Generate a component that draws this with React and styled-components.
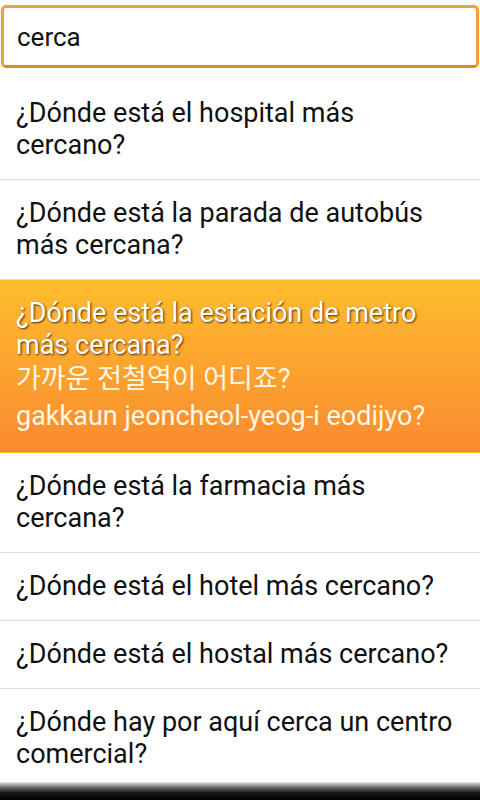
import styled, { createGlobalStyle } from "styled-components";

const GlobalStyle = createGlobalStyle`
  html, body {
    margin: 0;
    padding: 0;
    background: #fff;
  }
  body {
    font-family: Roboto, "Noto Sans", "Noto Sans CJK KR", sans-serif;
  }
`;

const Screen = styled.div`
  display: flex;
  flex-direction: column;
  height: 100vh;
  overflow: hidden;
  background: #fff;
`;

const SearchWrap = styled.div`
  padding: 5px 1px 0;
`;

const SearchInput = styled.input`
  display: block;
  box-sizing: border-box;
  width: 100%;
  height: 63px;
  margin: 0;
  padding: 0 13px;
  border: 3px solid #f1a136;
  border-bottom-color: #e08a26;
  border-radius: 5px;
  outline: none;
  background: #fff;
  font-family: Roboto, sans-serif;
  font-size: 26px;
  color: #111;
`;

const List = styled.ul`
  flex: 1;
  list-style: none;
  margin: 0;
  padding: 12px 0 0;
  overflow: hidden;
`;

const Row = styled.li`
  padding: 17px 16px 18px;
  border-bottom: 1px solid ${(p) => (p.$active ? "transparent" : "#dcdcdc")};
  background: ${(p) =>
    p.$active ? "linear-gradient(#fdbd2d, #fa8a30)" : "transparent"};
`;

const Phrase = styled.div`
  font-size: 27px;
  line-height: 32px;
  color: ${(p) => (p.$active ? "#fff" : "#111")};
  text-shadow: ${(p) =>
    p.$active ? "1px 1px 2px rgba(60, 30, 0, 0.9)" : "none"};
`;

const Translation = styled.div`
  font-size: 27px;
  line-height: 37px;
  color: #fff7e6;
  font-family: Roboto, "Noto Sans CJK KR", sans-serif;

  & + & {
    line-height: 36px;
  }
`;

const BottomShade = styled.div`
  flex: none;
  height: 18px;
  background: linear-gradient(#e4e4e4, #6a6a6a 30%, #161616 60%, #000);
`;

const phrases = [
  { es: "¿Dónde está el hospital más cercano?" },
  { es: "¿Dónde está la parada de autobús más cercana?" },
  {
    es: "¿Dónde está la estación de metro más cercana?",
    ko: "가까운 전철역이 어디죠?",
    rom: "gakkaun jeoncheol-yeog-i eodijyo?",
  },
  { es: "¿Dónde está la farmacia más cercana?" },
  { es: "¿Dónde está el hotel más cercano?" },
  { es: "¿Dónde está el hostal más cercano?" },
  { es: "¿Dónde hay por aquí cerca un centro comercial?" },
];

function App() {
  return (
    <>
      <GlobalStyle />
      <Screen>
        <SearchWrap>
          <SearchInput defaultValue="cerca" />
        </SearchWrap>
        <List>
          {phrases.map((p) => {
            const active = Boolean(p.ko);
            return (
              <Row key={p.es} $active={active}>
                <Phrase $active={active}>{p.es}</Phrase>
                {active && (
                  <>
                    <Translation>{p.ko}</Translation>
                    <Translation>{p.rom}</Translation>
                  </>
                )}
              </Row>
            );
          })}
        </List>
        <BottomShade />
      </Screen>
    </>
  );
}

export default App;
